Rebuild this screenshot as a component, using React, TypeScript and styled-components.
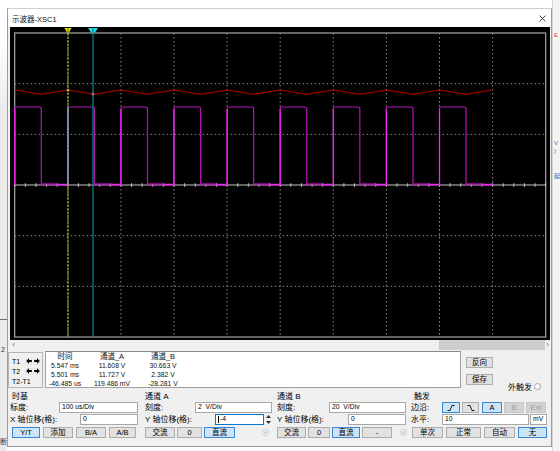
import React from "react";
import styled, { createGlobalStyle } from "styled-components";

const GlobalStyle = createGlobalStyle`
  * { box-sizing: border-box; }
  html, body { margin: 0; padding: 0; background: #fff; }
  body { font-family: "Liberation Sans", "Noto Sans CJK SC", sans-serif; color: #000; }
`;

const Page = styled.div`
  width: 560px;
  height: 451px;
  display: flex;
  overflow: hidden;
  background: #fff;
`;

const LeftStrip = styled.div`
  width: 7px;
  flex: none;
  display: flex;
  flex-direction: column;
  background: linear-gradient(#fff 0 40px, #ebebeb 110px);
  font-size: 7px;
  line-height: 8px;
  color: #444;
  overflow: hidden;
`;

const StripRule = styled.div<{ $top: number }>`
  margin-top: ${(p) => p.$top}px;
  height: 1px;
  background: #707070;
`;

const StripMark = styled.span<{ $top: number; $color: string; $left?: number }>`
  margin-top: ${(p) => p.$top}px;
  margin-left: ${(p) => p.$left ?? 0}px;
  color: ${(p) => p.$color};
  white-space: nowrap;
`;

const RightStrip = styled.div`
  width: 8px;
  flex: none;
  display: flex;
  flex-direction: column;
  padding-left: 2px;
  background: linear-gradient(90deg, #d4d4d4 0 1px, #f4f4f4 1px);
  font-size: 6px;
  line-height: 8px;
`;

const Window = styled.div`
  width: 545px;
  height: 439px;
  margin-top: 8px;
  flex: none;
  display: flex;
  flex-direction: column;
  background: #f0f0f0;
  border: 1px solid #9c9c9c;
  border-top-color: #cfcfcf;
`;

const TitleBar = styled.div`
  height: 18px;
  flex: none;
  display: flex;
  align-items: center;
  justify-content: space-between;
  padding: 0 5px 0 4px;
  background: #fff;
  font-size: 7.5px;
  color: #111;
`;

const Screen = styled.div`
  height: 313px;
  margin: 0 1px 0 2px;
  background: #000;
  flex: none;
  svg { display: block; }
`;

const ScrollBar = styled.div`
  height: 10px;
  margin: 0 1px 0 2px;
  display: flex;
  align-items: stretch;
  font-size: 8px;
  color: #606060;
  flex: none;
`;

const ScrollArrow = styled.div<{ $w: number }>`
  width: ${(p) => p.$w}px;
  display: flex;
  align-items: center;
  justify-content: center;
  line-height: 1;
`;

const Track = styled.div`
  flex: 1;
  display: flex;
`;

const Thumb = styled.div`
  width: 106px;
  margin-left: auto;
  background: #cdcdcd;
`;

const CursorSection = styled.div`
  height: 41px;
  flex: none;
  display: flex;
  padding-top: 2px;
`;

const CursorBox = styled.div`
  width: 35px;
  height: 36px;
  border: 1px solid #b4b4b4;
  padding: 3px 0 0 3px;
  display: flex;
  flex-direction: column;
`;

const CursorRow = styled.div`
  height: 10px;
  display: flex;
  align-items: center;
  gap: 2px;
  font-size: 7px;
`;

const CursorLabel = styled.span`
  width: 12px;
`;

const ArrowKey = styled.div`
  width: 6px;
  height: 7px;
  display: flex;
  align-items: center;
  justify-content: center;
  background: #e6e6e6;
`;

const Readout = styled.div`
  width: 416px;
  height: 37px;
  margin: -1px 0 0 2px;
  background: #fff;
  border: 1px solid #a0a0a0;
  border-top-color: #8a8a8a;
  display: grid;
  grid-template-columns: 38px 56px 46px;
  grid-auto-rows: 9px;
  align-content: start;
`;

const Cell = styled.div<{ $head?: boolean }>`
  text-align: center;
  font-size: ${(p) => (p.$head ? 7.5 : 6.8)}px;
  line-height: 9px;
  white-space: nowrap;
  color: #111;
`;

const SideButtons = styled.div`
  width: 27px;
  margin-left: 5px;
  padding-top: 5px;
  display: flex;
  flex-direction: column;
  gap: 6px;
`;

const ExtTrigger = styled.div`
  align-self: flex-end;
  margin-left: 15px;
  height: 10px;
  display: flex;
  align-items: center;
  gap: 2px;
  font-size: 8px;
`;

const Controls = styled.div`
  height: 50px;
  flex: none;
  display: flex;
`;

const Group = styled.div<{ $w: number; $pad: number }>`
  width: ${(p) => p.$w}px;
  flex: none;
  display: flex;
  flex-direction: column;
  padding: 1px 0 0 ${(p) => p.$pad}px;
`;

const GroupHead = styled.div<{ $indent?: number }>`
  height: 10px;
  padding-left: ${(p) => p.$indent ?? 0}px;
  font-size: 8px;
  line-height: 10px;
`;

const Row = styled.div<{ $gapTop?: number }>`
  height: 11px;
  margin-top: ${(p) => p.$gapTop ?? 0}px;
  display: flex;
  align-items: center;
  font-size: 8px;
`;

const Label = styled.span<{ $w?: number }>`
  ${(p) => (p.$w ? `width: ${p.$w}px; flex: none;` : "flex: 1;")}
  white-space: nowrap;
  line-height: 1;
`;

const Field = styled.div<{ $w: number; $focus?: boolean; $end?: number }>`
  width: ${(p) => p.$w}px;
  height: 11px;
  flex: none;
  margin-right: ${(p) => p.$end ?? 0}px;
  background: #fff;
  border: 1px solid ${(p) => (p.$focus ? "#0078d7" : "#a8a8a8")};
  padding-left: 2px;
  display: flex;
  align-items: center;
  font-size: 6.8px;
  line-height: 1;
  white-space: pre;
`;

const Caret = styled.span`
  width: 1px;
  height: 7px;
  background: #000;
  margin-right: 1px;
`;

const Spin = styled.div`
  width: 7px;
  height: 11px;
  margin: 0 4px 0 1px;
  display: flex;
  flex-direction: column;
  justify-content: space-around;
  align-items: center;
  background: #f0f0f0;
`;

const ButtonRow = styled.div<{ $indent?: number; $gap: number }>`
  height: 11px;
  margin-top: 2px;
  padding-left: ${(p) => p.$indent ?? 0}px;
  display: flex;
  align-items: center;
  gap: ${(p) => p.$gap}px;
`;

const Btn = styled.div<{ $w: number; $on?: boolean; $off?: boolean; $lead?: number }>`
  width: ${(p) => p.$w}px;
  height: 11px;
  flex: none;
  margin-left: ${(p) => p.$lead ?? 0}px;
  display: flex;
  align-items: center;
  justify-content: center;
  font-size: 7.5px;
  line-height: 1;
  background: ${(p) => (p.$on ? "#cce4f7" : p.$off ? "#d3d3d3" : "#e1e1e1")};
  border: 1px solid ${(p) => (p.$on ? "#3a86d4" : p.$off ? "#c6c6c6" : "#adadad")};
  color: ${(p) => (p.$off ? "#9d9d9d" : "#000")};
`;

const Radio = styled.div<{ $dot?: boolean; $end: number }>`
  width: 7px;
  height: 7px;
  margin-left: auto;
  margin-right: ${(p) => p.$end}px;
  border-radius: 50%;
  border: 1px solid ${(p) => (p.$dot ? "#c4c4c4" : "#a0a0a0")};
  background: #fff;
  display: flex;
  align-items: center;
  justify-content: center;
  &::after {
    content: "";
    width: 3px;
    height: 3px;
    border-radius: 50%;
    background: ${(p) => (p.$dot ? "#c8c8c8" : "transparent")};
  }
`;

const PlainRadio = styled.div`
  width: 7px;
  height: 7px;
  border-radius: 50%;
  border: 1px solid #a0a0a0;
  background: #fff;
`;

// ---- scope drawing ----
const X0 = 14.7;
const DX = 53.1;
const Y0 = 33;
const DY = 50.67;
const AXIS = Y0 + 3 * DY;
const HIGH = 107;
const gx = (k: number) => X0 + DX * k;

function Scope() {
  const right = gx(10);
  const bottom = Y0 + 6 * DY;

  let red = `M ${gx(0)} 90`;
  for (let k = 0; k < 9; k++) red += ` L ${gx(k + 0.5)} 94.2 L ${gx(k + 1)} 90`;

  let purple = `M ${gx(0)} ${AXIS}`;
  const bright: string[] = [];
  const dim: string[] = [];
  for (let k = 0; k < 9; k++) {
    const x = gx(k);
    const m = gx(k + 0.5);
    purple += ` L ${x} ${HIGH + 1.6} Q ${x} ${HIGH} ${x + 1.6} ${HIGH} L ${m - 1.6} ${HIGH} Q ${m} ${HIGH} ${m} ${HIGH + 1.6} L ${m} ${AXIS} L ${gx(k + 1)} ${AXIS}`;
    bright.push(`M ${x} ${AXIS} L ${x} ${HIGH + 2}`);
    bright.push(`M ${m + 15} ${AXIS - 0.6} L ${gx(k + 1)} ${AXIS - 0.6}`);
    dim.push(`M ${m} ${AXIS - 1.6} L ${m + 15} ${AXIS - 1.6}`);
  }

  const ticks: number[] = [];
  for (let i = 0; i <= 50; i++) ticks.push(X0 + (DX / 5) * i);

  return (
    <svg width={540} height={313} viewBox="10 27 540 313">
      <rect x={X0} y={Y0} width={right - X0} height={bottom - Y0} fill="none" stroke="#a8a8a8" strokeWidth={1.2} />
      {[1, 2, 3, 4, 5, 6, 7, 8, 9].map((k) => (
        <line key={`v${k}`} x1={gx(k)} x2={gx(k)} y1={Y0} y2={bottom} stroke="#9a9a9a" strokeWidth={0.9} strokeDasharray="1.5 2.5" />
      ))}
      {[1, 2, 4, 5].map((k) => (
        <line key={`h${k}`} x1={X0} x2={right} y1={Y0 + DY * k} y2={Y0 + DY * k} stroke="#9a9a9a" strokeWidth={0.9} strokeDasharray="1.5 2.5" />
      ))}
      <line x1={X0} x2={right} y1={AXIS} y2={AXIS} stroke="#c4c4c4" strokeWidth={1} />
      {ticks.map((t, i) => (
        <line key={`t${i}`} x1={t} x2={t} y1={AXIS - 1.8} y2={AXIS + 1.8} stroke="#d0d0d0" strokeWidth={0.9} />
      ))}

      <path d={red} fill="none" stroke="#b80000" strokeWidth={1.1} />
      <path d={purple} fill="none" stroke="#b414b4" strokeWidth={1.2} />
      <path d={dim.join(" ")} fill="none" stroke="#86088a" strokeWidth={1} />
      <path d={bright.join(" ")} fill="none" stroke="#f028f0" strokeWidth={1.2} />

      {/* cursor 1 */}
      <line x1={68} x2={68} y1={Y0} y2={bottom} stroke="#c8c800" strokeWidth={1} strokeDasharray="2.5 1" />
      <line x1={68} x2={68} y1={HIGH} y2={AXIS} stroke="#3cb4dc" strokeWidth={1} />
      <polygon points="64.5,28 71.5,28 69,32.5 67,32.5" fill="#e6e600" />
      <line x1={68} x2={68} y1={28.5} y2={32} stroke="#303000" strokeWidth={0.8} />
      <circle cx={68} cy={90} r={1.6} fill="#a0a040" />

      {/* cursor 2 */}
      <line x1={93} x2={93} y1={Y0} y2={bottom} stroke="#008c8c" strokeWidth={1.2} />
      <polygon points="88,28 98,28 95,32.5 91,32.5" fill="#18e0f0" />
      <line x1={93} x2={93} y1={28.5} y2={32} stroke="#004050" strokeWidth={0.8} />
      <circle cx={93} cy={94} r={1.6} fill="#a06070" />
    </svg>
  );
}

const CloseIcon = () => (
  <svg width={7} height={7} viewBox="0 0 7 7">
    <path d="M0.5 0.5 L6.5 6.5 M6.5 0.5 L0.5 6.5" stroke="#333" strokeWidth={0.9} />
  </svg>
);

const Arrow = ({ dir }: { dir: "l" | "r" }) => (
  <svg width={6} height={6} viewBox="0 0 6 6">
    <path
      d={dir === "l" ? "M0.2 3 L3 0.3 V2 H5.8 V4 H3 V5.7 Z" : "M5.8 3 L3 0.3 V2 H0.2 V4 H3 V5.7 Z"}
      fill="#000"
    />
  </svg>
);

const Edge = ({ rise }: { rise: boolean }) => (
  <svg width={8} height={6} viewBox="0 0 8 6">
    <path d={rise ? "M0.5 5.5 H3 L5 0.5 H7.5" : "M0.5 0.5 H3 L5 5.5 H7.5"} fill="none" stroke="#000" strokeWidth={0.9} />
  </svg>
);

const SpinTri = ({ up }: { up: boolean }) => (
  <svg width={5} height={3} viewBox="0 0 5 3">
    <path d={up ? "M0 3 L2.5 0 L5 3 Z" : "M0 0 L2.5 3 L5 0 Z"} fill="#333" />
  </svg>
);

const readings = [
  ["时间", "通道_A", "通道_B"],
  ["5.547 ms", "11.608 V", "30.663 V"],
  ["5.501 ms", "11.727 V", "2.382 V"],
  ["-46.485 us", "119.486 mV", "-28.281 V"],
];

export default function App() {
  return (
    <>
      <GlobalStyle />
      <Page>
        <LeftStrip>
          <StripRule $top={319} />
          <StripMark $top={26} $color="#333" $left={1}>2</StripMark>
          <StripMark $top={84} $color="#333">断</StripMark>
        </LeftStrip>

        <Window>
          <TitleBar>
            <span>示波器-XSC1</span>
            <CloseIcon />
          </TitleBar>

          <Screen>
            <Scope />
          </Screen>

          <ScrollBar>
            <ScrollArrow $w={7}>‹</ScrollArrow>
            <Track>
              <Thumb />
            </Track>
            <ScrollArrow $w={5}>›</ScrollArrow>
          </ScrollBar>

          <CursorSection>
            <CursorBox>
              <CursorRow>
                <CursorLabel>T1</CursorLabel>
                <ArrowKey><Arrow dir="l" /></ArrowKey>
                <ArrowKey><Arrow dir="r" /></ArrowKey>
              </CursorRow>
              <CursorRow>
                <CursorLabel>T2</CursorLabel>
                <ArrowKey><Arrow dir="l" /></ArrowKey>
                <ArrowKey><Arrow dir="r" /></ArrowKey>
              </CursorRow>
              <CursorRow>T2-T1</CursorRow>
            </CursorBox>

            <Readout>
              {readings.map((row, r) =>
                row.map((v, c) => (
                  <Cell key={`${r}-${c}`} $head={r === 0}>
                    {v}
                  </Cell>
                ))
              )}
            </Readout>

            <SideButtons>
              <Btn $w={27}>反向</Btn>
              <Btn $w={27}>保存</Btn>
            </SideButtons>

            <ExtTrigger>
              外触发
              <PlainRadio />
            </ExtTrigger>
          </CursorSection>

          <Controls>
            <Group $w={134} $pad={2}>
              <GroupHead $indent={2}>时基</GroupHead>
              <Row>
                <Label>标度:</Label>
                <Field $w={79} $end={4}>100 us/Div</Field>
              </Row>
              <Row $gapTop={1}>
                <Label>X 轴位移(格):</Label>
                <Field $w={58} $end={4}>0</Field>
              </Row>
              <ButtonRow $indent={2} $gap={3}>
                <Btn $w={28} $on>Y/T</Btn>
                <Btn $w={30}>添加</Btn>
                <Btn $w={30}>B/A</Btn>
                <Btn $w={27}>A/B</Btn>
              </ButtonRow>
            </Group>

            <Group $w={134} $pad={3}>
              <GroupHead>通道 A</GroupHead>
              <Row>
                <Label>刻度:</Label>
                <Field $w={77} $end={4}>2  V/Div</Field>
              </Row>
              <Row $gapTop={1}>
                <Label>Y 轴位移(格):</Label>
                <Field $w={49} $focus>
                  <Caret />-4
                </Field>
                <Spin>
                  <SpinTri up />
                  <SpinTri up={false} />
                </Spin>
              </Row>
              <ButtonRow $gap={2}>
                <Btn $w={30}>交流</Btn>
                <Btn $w={25}>0</Btn>
                <Btn $w={31} $on>直流</Btn>
                <Radio $dot $end={7} />
              </ButtonRow>
            </Group>

            <Group $w={134} $pad={1}>
              <GroupHead>通道 B</GroupHead>
              <Row>
                <Label>刻度:</Label>
                <Field $w={77} $end={4}>20  V/Div</Field>
              </Row>
              <Row $gapTop={1}>
                <Label>Y 轴位移(格):</Label>
                <Field $w={58} $end={4}>0</Field>
              </Row>
              <ButtonRow $gap={2}>
                <Btn $w={29}>交流</Btn>
                <Btn $w={22}>0</Btn>
                <Btn $w={28} $on>直流</Btn>
                <Btn $w={30}>-</Btn>
                <Radio $dot $end={3} />
              </ButtonRow>
            </Group>

            <Group $w={141} $pad={1}>
              <GroupHead $indent={3}>触发</GroupHead>
              <Row>
                <Label $w={31}>边沿:</Label>
                <Btn $w={18} $on><Edge rise /></Btn>
                <Btn $w={17} $lead={2}><Edge rise={false} /></Btn>
                <Btn $w={20} $lead={3} $on>A</Btn>
                <Btn $w={20} $lead={2} $off>B</Btn>
                <Btn $w={20} $lead={2} $off>Ext</Btn>
              </Row>
              <Row $gapTop={1}>
                <Label $w={31}>水平:</Label>
                <Field $w={87}>10</Field>
                <Field $w={17} $end={0} style={{ marginLeft: 1 }}>mV</Field>
              </Row>
              <ButtonRow $indent={1} $gap={3}>
                <Btn $w={31}>单次</Btn>
                <Btn $w={35}>正常</Btn>
                <Btn $w={31}>自动</Btn>
                <Btn $w={29} $on>无</Btn>
              </ButtonRow>
            </Group>
          </Controls>
        </Window>

        <RightStrip>
          <StripMark $top={31} $color="#e04040">E</StripMark>
          <StripMark $top={100} $color="#3a5fcd">V</StripMark>
          <StripMark $top={0} $color="#3a5fcd">)</StripMark>
          <StripMark $top={17} $color="#3a5fcd">起</StripMark>
        </RightStrip>
      </Page>
    </>
  );
}
